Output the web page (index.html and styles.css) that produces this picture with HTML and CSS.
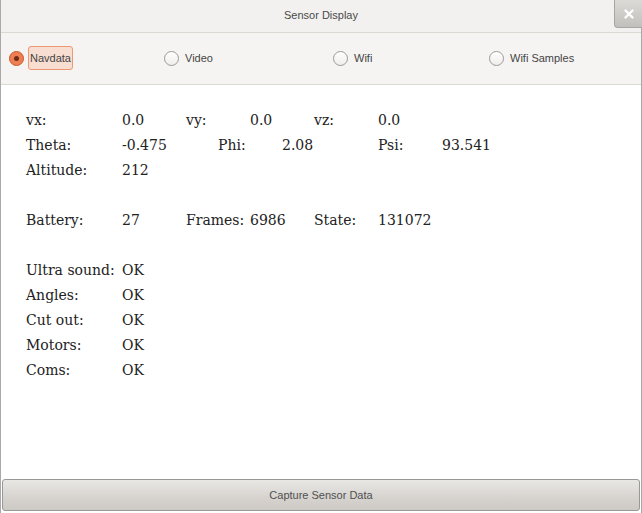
FILE: index.html
```html
<!DOCTYPE html>
<html>
<head>
<meta charset="utf-8">
<link rel="stylesheet" href="styles.css">
</head>
<body>
<div class="window">
  <div class="titlebar">
    <span class="title">Sensor Display</span>
    <div class="close">
      <svg width="12" height="12" viewBox="0 0 12 12"><path d="M2.5 2.5 L9.5 9.5 M9.5 2.5 L2.5 9.5" stroke="#fff" stroke-width="2.4" stroke-linecap="round"/></svg>
    </div>
  </div>
  <div class="tabs">
    <div class="opt active"><span class="radio"><span class="dot"></span></span><span class="lbl">Navdata</span></div>
    <div class="opt"><span class="radio"></span><span class="lbl">Video</span></div>
    <div class="opt"><span class="radio"></span><span class="lbl">Wifi</span></div>
    <div class="opt"><span class="radio"></span><span class="lbl">Wifi Samples</span></div>
  </div>
  <div class="content">
    <div class="row">
      <span class="c0">vx:</span><span class="c3">0.0</span><span class="c5">vy:</span><span class="c7">0.0</span><span class="c9">vz:</span><span class="c11">0.0</span>
    </div>
    <div class="row">
      <span class="c0">Theta:</span><span class="c3">-0.475</span><span class="c6">Phi:</span><span class="c8">2.08</span><span class="c11">Psi:</span><span class="c13">93.541</span>
    </div>
    <div class="row">
      <span class="c0">Altitude:</span><span class="c3">212</span>
    </div>
    <div class="row"></div>
    <div class="row">
      <span class="c0">Battery:</span><span class="c3">27</span><span class="c5">Frames:</span><span class="c7">6986</span><span class="c9">State:</span><span class="c11">131072</span>
    </div>
    <div class="row"></div>
    <div class="row"><span class="c0">Ultra sound:</span><span class="c3">OK</span></div>
    <div class="row"><span class="c0">Angles:</span><span class="c3">OK</span></div>
    <div class="row"><span class="c0">Cut out:</span><span class="c3">OK</span></div>
    <div class="row"><span class="c0">Motors:</span><span class="c3">OK</span></div>
    <div class="row"><span class="c0">Coms:</span><span class="c3">OK</span></div>
  </div>
  <div class="footer">
    <button class="capture">Capture Sensor Data</button>
  </div>
</div>
</body>
</html>
```
FILE: styles.css
```css
html, body {
  margin: 0;
  padding: 0;
  width: 642px;
  height: 513px;
  overflow: hidden;
  background: #fff;
}
.window {
  width: 642px;
  height: 513px;
  box-sizing: border-box;
  border-left: 1px solid #a9a9a9;
  border-right: 1px solid #a9a9a9;
  display: flex;
  flex-direction: column;
  font-family: "Liberation Sans", Arial, sans-serif;
}
.titlebar {
  height: 32px;
  flex: none;
  background: #f2f1ef;
  border-bottom: 1px solid #dcd8d4;
  display: flex;
  align-items: center;
  justify-content: center;
  position: relative;
}
.title {
  font-size: 11px;
  color: #4a4a4a;
  margin-top: -2px;
}
.close {
  position: absolute;
  right: -1px;
  top: 0;
  width: 28px;
  height: 28px;
  box-sizing: border-box;
  border-left: 1px solid #a8a6a3;
  border-bottom: 1px solid #a8a6a3;
  border-bottom-left-radius: 4px;
  background: linear-gradient(#dcdad7, #c2c0bd);
  display: flex;
  align-items: center;
  justify-content: center;
}
.tabs {
  height: 51px;
  flex: none;
  background: #f5f4f2;
  border-bottom: 1px solid #dcd8d4;
  display: grid;
  grid-template-columns: 155px 169px 156px auto;
  align-items: center;
  padding-left: 8px;
}
.opt {
  display: flex;
  align-items: center;
  font-size: 11px;
  color: #444;
  margin-top: -1px;
}
.radio {
  width: 13px;
  height: 13px;
  border-radius: 50%;
  border: 1px solid #9d9a97;
  background: linear-gradient(#ffffff, #efedeb);
  display: flex;
  align-items: center;
  justify-content: center;
  flex: none;
}
.opt.active .radio {
  border-color: #c9582c;
  background: #ef7f52;
}
.dot {
  width: 5px;
  height: 5px;
  border-radius: 50%;
  background: #6b2d17;
}
.lbl {
  margin-left: 6px;
}
.opt.active .lbl {
  margin-left: 4px;
  padding: 5px 1px 5px 1px;
  border: 1px solid #ee9873;
  border-radius: 3px;
  background: #f8ddd1;
}
.content {
  flex: 1;
  background: #fff;
  padding: 27px 0 0 25px;
  font-family: "DejaVu Serif", serif;
  font-size: 14px;
  color: #222;
}
.row {
  height: 25px;
  display: grid;
  grid-template-columns: repeat(16, 32px);
  align-items: start;
  white-space: nowrap;
}
.c0 { grid-column: 1 / span 3; }
.c3 { grid-column: 4 / span 2; }
.c5 { grid-column: 6 / span 2; }
.c6 { grid-column: 7 / span 2; }
.c7 { grid-column: 8 / span 2; }
.c8 { grid-column: 9 / span 2; }
.c9 { grid-column: 10 / span 2; }
.c11 { grid-column: 12 / span 2; }
.c13 { grid-column: 14 / span 2; }
.footer {
  flex: none;
  height: 35px;
  padding: 1px 1px 2px 1px;
  box-sizing: border-box;
  background: #fff;
}
.capture {
  width: 100%;
  height: 32px;
  border: 1px solid #9a9895;
  border-radius: 3px;
  background: linear-gradient(#e9e7e4, #d6d3cf 60%, #cdcac6);
  font-family: "Liberation Sans", Arial, sans-serif;
  font-size: 11px;
  color: #505050;
  padding: 0;
  margin: 0;
}
```
